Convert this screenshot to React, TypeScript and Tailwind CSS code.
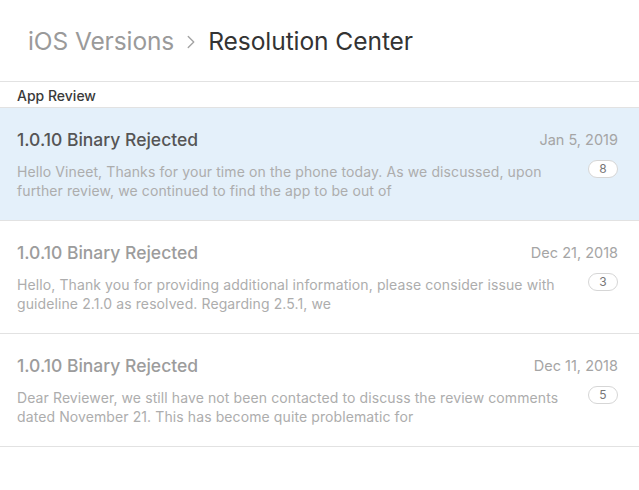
import { ChevronRight } from 'lucide-react'

const threads = [
  {
    id: 1,
    title: '1.0.10 Binary Rejected',
    date: 'Jan 5, 2019',
    lines: [
      'Hello Vineet, Thanks for your time on the phone today. As we discussed, upon',
      'further review, we continued to find the app to be out of',
    ],
    count: 8,
    selected: true,
  },
  {
    id: 2,
    title: '1.0.10 Binary Rejected',
    date: 'Dec 21, 2018',
    lines: [
      'Hello, Thank you for providing additional information, please consider issue with',
      'guideline 2.1.0 as resolved. Regarding 2.5.1, we',
    ],
    count: 3,
    selected: false,
  },
  {
    id: 3,
    title: '1.0.10 Binary Rejected',
    date: 'Dec 11, 2018',
    lines: [
      'Dear Reviewer, we still have not been contacted to discuss the review comments',
      'dated November 21. This has become quite problematic for',
    ],
    count: 5,
    selected: false,
  },
]

export default function App() {
  return (
    <div className="w-[639px] h-[490px] bg-white font-['Inter',sans-serif] overflow-hidden">
      {/* Breadcrumb */}
      <div className="h-[82px] flex items-center pl-[28px] pt-[2px] border-b border-[#e2e2e2]">
        <span className="text-[24.5px] text-[#9a9a9a] tracking-[-0.1px]">iOS Versions</span>
        <ChevronRight className="w-[22px] h-[22px] mx-[6px] text-[#a3a3a3]" strokeWidth={1.5} />
        <span className="text-[24.6px] text-[#333] tracking-[-0.1px]">Resolution Center</span>
      </div>

      {/* Section */}
      <div className="h-[26px] flex items-center pl-[17px] pt-[1px] border-b border-[#e2e2e2]">
        <span className="text-[14px] font-medium text-[#3a3a3a]">App Review</span>
      </div>

      <div>
        {threads.map((t) => (
          <ThreadRow key={t.id} {...t} />
        ))}
      </div>
    </div>
  )
}

function ThreadRow({ title, date, lines, count, selected }: any) {
  return (
    <div
      className={`h-[113px] border-b border-[#e2e2e2] pl-[17px] pr-[21px] pt-[21px] ${
        selected ? 'bg-[#e4f0fa]' : 'bg-white'
      }`}
    >
      <div className="flex items-center justify-between h-[22px]">
        <span className={`text-[17.5px] font-medium ${selected ? 'text-[#555]' : 'text-[#9c9c9c]'}`}>
          {title}
        </span>
        <span className="text-[14.5px] text-[#a5a5a5]">{date}</span>
      </div>
      <div className="flex items-start justify-between mt-[11px]">
        <p className="text-[14px] leading-[19px] tracking-[0.1px] text-[#adadad]">
          {lines[0]}
          <br />
          {lines[1]}
        </p>
        <span className="mt-[-2px] w-[30px] h-[18px] rounded-full border border-[#d6d6d6] bg-white flex items-center justify-center text-[12px] text-[#777]">
          {count}
        </span>
      </div>
    </div>
  )
}
